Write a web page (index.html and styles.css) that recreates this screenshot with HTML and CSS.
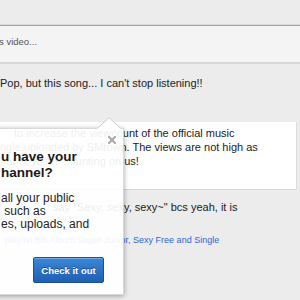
FILE: index.html
```html
<!DOCTYPE html>
<html lang="en">
<head>
    <meta charset="UTF-8">
    <meta name="viewport" content="width=device-width, initial-scale=1.0">
    <title>Comments</title>
    <link rel="stylesheet" href="styles.css">
</head>
<body>
    <div class="compose">
        <span class="placeholder">s video...</span>
    </div>

    <div class="comment c1">Pop, but this song... I can't stop listening!!</div>

    <div class="comment-box">
        <div class="comment line-first">to increase the viewcount of the official music</div>
        <div class="comment">ngle uploaded by SMtown. The views are not high as</div>
        <div class="comment">our boys are counting on us!</div>
        <div class="votes">413</div>
    </div>

    <div class="comment c3">say "Sexy, sexy, sexy~" bcs yeah, it is</div>

    <div class="feed-item">
        <span class="feed-text">playlist</span>
        <a href="#">6th Album Super Junior</a>, <a href="#">Sexy Free and Single</a>
    </div>

    <!-- channel promo popup -->
    <div class="promo">
        <svg class="promo-arrow" width="26" height="12" viewBox="0 0 26 12">
            <polygon points="0,12 13,0.5 26,12" fill="#fff"/>
            <polyline points="0.5,12 13,0.7 25.5,12" fill="none" stroke="#c8c8c8" stroke-width="1"/>
        </svg>
        <svg class="promo-close" width="8" height="8" viewBox="0 0 8 8">
            <path d="M1 1 L7 7 M7 1 L1 7" stroke="#a8a8a8" stroke-width="2" stroke-linecap="square"/>
        </svg>
        <h3 class="promo-title">u have your<br>hannel?</h3>
        <p class="promo-text">all your public<br>&nbsp;such as<br>es, uploads, and</p>
        <button class="promo-button">Check it out</button>
    </div>
</body>
</html>
```

FILE: styles.css
```css
* {
    margin: 0;
    padding: 0;
    box-sizing: border-box;
}

body {
    font-family: "Liberation Sans", Arial, sans-serif;
    background-color: #ececec;
    color: #222;
    width: 300px;
    height: 300px;
    overflow: hidden;
    position: relative;
}

.compose {
    margin-top: 25px;
    height: 39px;
    background-color: #f4f4f4;
    border-top: 1px solid #a3a3a3;
    border-bottom: 2px solid #d8d8d8;
    box-shadow: 0 -1px 0 #dadada;
    padding-top: 10px;
}

.placeholder {
    display: block;
    font-size: 9.5px;
    line-height: 12px;
    color: #555;
    margin-left: -1px;
}

.comment {
    font-size: 11px;
    line-height: 14px;
    white-space: nowrap;
}

.c1 {
    margin-top: 12px;
}

.comment-box {
    margin-top: 32px;
    margin-right: 3px;
    height: 68px;
    padding-top: 4px;
    background-color: #fff;
    border-right: 1px solid #dcdcdc;
    border-bottom: 1px solid #d6d6d6;
}

.line-first {
    padding-left: 14px;
}

.votes {
    font-size: 9px;
    line-height: 14px;
    color: #999;
    padding-left: 20px;
}

.c3 {
    margin-top: 10px;
    padding-left: 53px;
}

.feed-item {
    margin-top: 20px;
    padding-left: 5px;
    font-size: 9px;
    line-height: 12px;
    color: #2f67d6;
    white-space: nowrap;
}

.feed-item a {
    color: #2f67d6;
    text-decoration: none;
}

/* popup */
.promo {
    position: absolute;
    left: -12px;
    top: 128px;
    width: 136px;
    height: 167px;
    padding: 20px 0 0 12px;
    background-color: rgba(255, 255, 255, 0.92);
    border: 1px solid rgba(0, 0, 0, 0.15);
    box-shadow: 0 1px 5px rgba(0, 0, 0, 0.35);
}

.promo-arrow {
    position: absolute;
    top: -12px;
    left: 107px;
    display: block;
}

.promo-close {
    position: absolute;
    top: 7px;
    right: 7px;
    display: block;
}

.promo-title {
    font-size: 13.5px;
    line-height: 16px;
    font-weight: bold;
    color: #1a1a1a;
    white-space: nowrap;
}

.promo-text {
    margin-top: 11px;
    font-size: 12px;
    line-height: 13px;
    color: #222;
    white-space: nowrap;
}

.promo-button {
    margin: 26px 0 0 32px;
    width: 71px;
    height: 26px;
    font-family: "Liberation Sans", Arial, sans-serif;
    font-size: 9.5px;
    font-weight: bold;
    color: #fff;
    text-shadow: 0 -1px 0 rgba(0, 0, 0, 0.4);
    background: linear-gradient(#3c87d8, #1d5fb3);
    border: 1px solid #1b4f97;
    border-radius: 2px;
    box-shadow: inset 0 1px 0 rgba(255, 255, 255, 0.3);
    cursor: pointer;
}
```
